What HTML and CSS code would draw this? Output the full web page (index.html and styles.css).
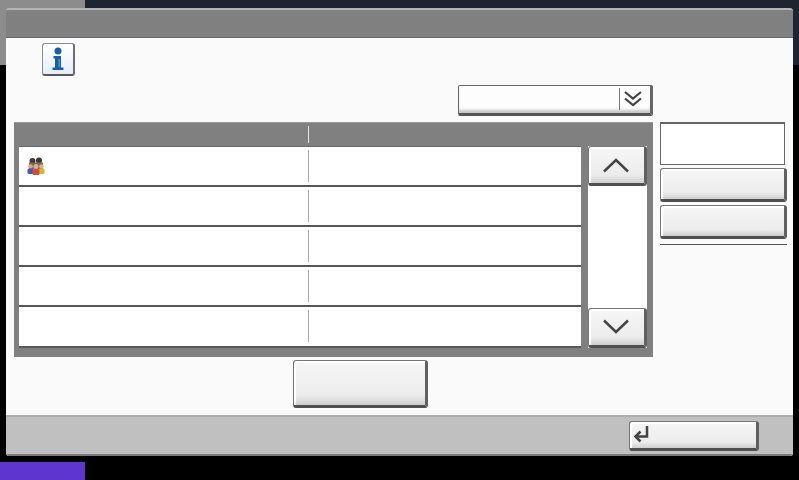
FILE: index.html
```html
<!DOCTYPE html>
<html lang="en">
<head>
  <meta charset="UTF-8" />
  <title>Panel</title>
  <link rel="stylesheet" href="styles.css">
</head>
<body>

<div class="backdrop">
  <div class="bg-grey"></div>
  <div class="bg-navy"></div>
  <div class="bg-purple"></div>
</div>

<div class="dialog">
  <div class="titlebar"></div>

  <div class="content">
    <button class="info-btn">
      <svg width="22" height="26" viewBox="0 0 22 26">
        <circle cx="11" cy="5" r="3.500" fill="#1c5ea4"/>
        <path d="M6.500 10H14v11.500h2.500V24h-11v-2.500H8v-9H6.500z" fill="#1c5ea4"/>
        <path d="M11.500 13h1.500v8h-1.500z" fill="#3f9ad8"/>
      </svg>
    </button>

    <div class="select-row">
      <div class="select">
        <div class="select-value"></div>
        <div class="select-arrow">
          <svg width="20" height="18" viewBox="0 0 20 18" fill="none" stroke="#444" stroke-width="2.200">
            <path d="M2 2l8 6.500L18 2"/>
            <path d="M2 8.500l8 6.500 8-6.500"/>
          </svg>
        </div>
      </div>
    </div>

    <div class="main">
      <div class="panel">
        <div class="panel-head">
          <div class="head-col"></div>
          <div class="head-col"></div>
        </div>
        <div class="panel-body">
          <div class="rows">
            <div class="row">
              <div class="cell">
                <svg class="people" width="18" height="18" viewBox="0 0 18 18">
                  <circle cx="5.500" cy="4" r="3" fill="#4a3530"/>
                  <circle cx="12" cy="3.500" r="3" fill="#3a3432"/>
                  <path d="M2 5.500h14V12H2z" fill="#7a6658"/>
                  <circle cx="3.500" cy="9.500" r="2.300" fill="#d8a888"/>
                  <circle cx="14.500" cy="9.500" r="2.300" fill="#d8b878"/>
                  <circle cx="9" cy="9.500" r="2.500" fill="#e0ac98"/>
                  <rect x="0.500" y="11.500" width="6" height="5.500" rx="1.500" fill="#4458b0"/>
                  <rect x="11.500" y="11.500" width="6" height="5.500" rx="1.500" fill="#e0b030"/>
                  <rect x="5.500" y="12" width="7" height="6" rx="1.500" fill="#c8503c"/>
                </svg>
              </div>
              <div class="cell"></div>
            </div>
            <div class="row"><div class="cell"></div><div class="cell"></div></div>
            <div class="row"><div class="cell"></div><div class="cell"></div></div>
            <div class="row"><div class="cell"></div><div class="cell"></div></div>
            <div class="row"><div class="cell"></div><div class="cell"></div></div>
          </div>
          <div class="scroller">
            <button class="btn scroll-btn">
              <svg width="28" height="16" viewBox="0 0 28 16" fill="none" stroke="#444" stroke-width="2.500">
                <path d="M2 14.500L14 3l12 11.500"/>
              </svg>
            </button>
            <div class="track"></div>
            <button class="btn scroll-btn">
              <svg width="28" height="16" viewBox="0 0 28 16" fill="none" stroke="#444" stroke-width="2.500">
                <path d="M2 1.500L14 13 26 1.500"/>
              </svg>
            </button>
          </div>
        </div>
      </div>

      <div class="side">
        <div class="side-box"></div>
        <button class="btn side-btn"></button>
        <button class="btn side-btn"></button>
        <div class="side-line"></div>
      </div>
    </div>

    <div class="center-row">
      <button class="btn center-btn"></button>
    </div>
  </div>

  <div class="footer">
    <button class="btn ok-btn">
      <svg width="16" height="18" viewBox="0 0 16 18" fill="none" stroke="#444" stroke-width="2.500">
        <path d="M14 1v10.500H3"/>
        <path d="M7.500 6.500L2.500 11.500l5 5"/>
      </svg>
    </button>
  </div>
</div>

</body>
</html>
```

FILE: styles.css
```css
html, body {
  margin: 0;
  height: 480px;
  overflow: hidden;
  background: #000;
}
button {
  padding: 0;
  margin: 0;
  display: flex;
  align-items: center;
  justify-content: center;
}

/* what is behind the dialog */
.bg-grey {
  position: absolute;
  left: 0;
  top: 0;
  width: 85px;
  height: 65px;
  background: #8c8c8c;
}
.bg-navy {
  position: absolute;
  left: 85px;
  top: 0;
  width: 714px;
  height: 65px;
  background: #1e2530;
}
.bg-purple {
  position: absolute;
  left: 0;
  top: 462px;
  width: 85px;
  height: 18px;
  background: #5f35d0;
}

.dialog {
  position: relative;
  width: 787px;
  height: 448px;
  margin: 8px 0 0 6px;
  background: #fafafa;
  border-radius: 4px 4px 3px 3px;
  display: flex;
  flex-direction: column;
  overflow: hidden;
}
.titlebar {
  height: 27px;
  background: #808080;
  border-top: 2px solid #b4b4b4;
  border-bottom: 1px solid #666;
}
.content {
  height: 377px;
  box-sizing: border-box;
  padding: 5px 6px 0 8px;
  position: relative;
}
.info-btn {
  width: 33px;
  height: 33px;
  margin-left: 28px;
  box-sizing: border-box;
  background: linear-gradient(#ffffff, #e6edf6);
  border: 1px solid #8a8a90;
  border-bottom: 2px solid #55555c;
  border-right: 2px solid #6c6c72;
  border-radius: 3px;
}
.select-row {
  display: flex;
  margin-top: 9px;
  padding-left: 444px;
}
.select {
  width: 195px;
  height: 31px;
  box-sizing: border-box;
  display: flex;
  background: #fdfdfd;
  border: 1px solid #666;
  border-bottom: 3px solid #555;
  border-right: 3px solid #666;
  border-radius: 2px;
  box-shadow: inset 0 -4px 3px -1px #c4c4c4;
}
.select-value {
  flex: 1;
}
.select-arrow {
  width: 31px;
  height: 22px;
  margin-top: 2px;
  padding-right: 4px;
  box-sizing: border-box;
  border-left: 1px solid #777;
  display: flex;
  align-items: center;
  justify-content: center;
}

.main {
  display: flex;
  gap: 7px;
  margin-top: 6px;
}
.panel {
  width: 639px;
  height: 235px;
  background: #808080;
  border-top: 1px solid #9a9a9a;
  box-sizing: border-box;
}
.panel-head {
  height: 23px;
  display: flex;
}
.head-col {
  width: 294px;
  height: 17px;
  margin-top: 3px;
  border-right: 1px solid #e6e6e6;
}
.head-col + .head-col {
  border-right: none;
}
.panel-body {
  display: flex;
  gap: 7px;
  padding-left: 5px;
}
.rows {
  width: 562px;
  height: 202px;
  background: #585858;
  display: flex;
  flex-direction: column;
  gap: 2px;
  border-top: 1px solid #666;
  box-sizing: border-box;
}
.row {
  height: 38px;
  background: #fff;
  display: flex;
}
.row:last-child {
  height: 39px;
}
.cell {
  height: 32px;
  margin-top: 3px;
  display: flex;
  align-items: center;
}
.cell:first-child {
  width: 281px;
  border-right: 1px solid #a8a8a8;
  padding-left: 8px;
}
.people {
  margin-top: -1px;
}

.btn {
  box-sizing: border-box;
  background: linear-gradient(#f6f6f6, #ececec 78%, #cecece);
  border: 1px solid #777;
  border-bottom: 3px solid #505050;
  border-right: 3px solid #606060;
  border-radius: 3px;
  box-shadow: inset 2px 2px 1px #fff;
}
.scroller {
  width: 59px;
  height: 202px;
  background: #fff;
  display: flex;
  flex-direction: column;
}
.scroll-btn {
  width: 59px;
  height: 40px;
  flex: none;
  padding-right: 2px;
}
.track {
  flex: 1;
}

.side {
  width: 127px;
  display: flex;
  flex-direction: column;
  gap: 3px;
}
.side-box {
  height: 43px;
  box-sizing: border-box;
  background: #fff;
  border: 1px solid #666;
  border-top-width: 2px;
  margin-right: 2px;
}
.side-btn {
  height: 34px;
  width: 127px;
  flex: none;
}
.side-line {
  height: 1px;
  background: #555;
  margin-top: 2px;
}

.center-row {
  display: flex;
  justify-content: flex-start;
  padding-left: 279px;
  margin-top: 3px;
}
.center-btn {
  width: 135px;
  height: 48px;
}

.footer {
  height: 41px;
  box-sizing: border-box;
  background: #c0c0c0;
  border-top: 2px solid #adadad;
  border-bottom: 2px solid #7a7a7a;
  display: flex;
  align-items: center;
  padding-left: 623px;
}
.ok-btn {
  width: 130px;
  height: 30px;
  justify-content: flex-start;
  padding-left: 3px;
  padding-bottom: 2px;
}
```
